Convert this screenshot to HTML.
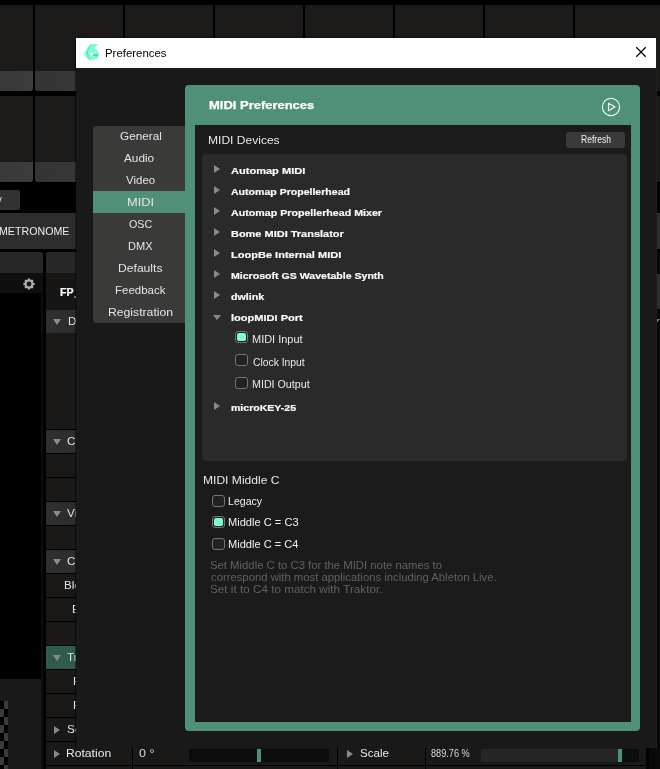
<!DOCTYPE html>
<html><head><meta charset="utf-8"><title>Preferences</title>
<style>
*{box-sizing:border-box;margin:0;padding:0}
html,body{width:660px;height:769px;overflow:hidden;background:#000}
body{position:relative;font-family:"Liberation Sans",sans-serif}
div,span,svg{position:absolute}
.t{white-space:pre;transform-origin:0 50%;display:block}
.cell{width:88px;background:#1b1a19;border-radius:0 0 3px 3px;overflow:hidden}
.cell i{position:absolute;left:0;right:0;bottom:0;height:19.6px;background:linear-gradient(90deg,#343434,#3c3c3c)}
.row{left:46px;width:600px;height:23px;background:#1a1918}
.hdr{background:linear-gradient(90deg,#2f2f2f 0,#2a2a2a 60px)}
.tri-r{width:0;height:0;border-left:6px solid #8a8a8a;border-top:4px solid transparent;border-bottom:4px solid transparent}
.tri-d{width:0;height:0;border-top:5px solid #8a8a8a;border-left:3.5px solid transparent;border-right:3.5px solid transparent}
.cb{width:12.5px;height:12px;border:1px solid #757575;border-radius:3px;background:#222}
.cb.on::after{content:"";position:absolute;left:.6px;top:.6px;right:.6px;bottom:.6px;border-radius:1.8px;background:#7dfcd3}
.gs{left:0;top:0;width:660px;height:769px;will-change:transform}
</style></head><body>
<!-- ===== background app ===== -->
<div id="bg" style="left:0;top:0;width:660px;height:769px">
<div class="cell" style="left:-55px;top:5px;height:85.5px"><i></i></div>
<div class="cell" style="left:-55px;top:95.8px;height:85.8px"><i></i></div>
<div class="cell" style="left:35px;top:5px;height:85.5px"><i></i></div>
<div class="cell" style="left:35px;top:95.8px;height:85.8px"><i></i></div>
<div class="cell" style="left:125px;top:5px;height:85.5px"><i></i></div>
<div class="cell" style="left:125px;top:95.8px;height:85.8px"><i></i></div>
<div class="cell" style="left:215px;top:5px;height:85.5px"><i></i></div>
<div class="cell" style="left:215px;top:95.8px;height:85.8px"><i></i></div>
<div class="cell" style="left:305px;top:5px;height:85.5px"><i></i></div>
<div class="cell" style="left:305px;top:95.8px;height:85.8px"><i></i></div>
<div class="cell" style="left:395px;top:5px;height:85.5px"><i></i></div>
<div class="cell" style="left:395px;top:95.8px;height:85.8px"><i></i></div>
<div class="cell" style="left:485px;top:5px;height:85.5px"><i></i></div>
<div class="cell" style="left:485px;top:95.8px;height:85.8px"><i></i></div>
<div class="cell" style="left:575px;top:5px;height:85.5px"><i></i></div>
<div class="cell" style="left:575px;top:95.8px;height:85.8px"><i></i></div>
<div class="cell" style="left:665px;top:5px;height:85.5px"><i></i></div>
<div class="cell" style="left:665px;top:95.8px;height:85.8px"><i></i></div>
<div style="left:656px;top:5px;width:4px;height:85.5px;background:#1b1a19"></div>
<div style="left:656px;top:95.8px;width:4px;height:85.8px;background:#1b1a19"></div>
<div style="left:0;top:190px;width:19.8px;height:19.7px;background:#323232;border-radius:0 2.5px 2.5px 0"></div>
<div style="left:-3px;top:196.5px;width:4px;height:5px;border-right:1.6px solid #ddd;transform:skewX(-18deg)"></div>
<div style="left:0;top:212.8px;width:660px;height:36px;background:#2d2d2d"></div>
<div style="left:-10px;top:252px;width:53px;height:22px;background:#272727;border-radius:3px 3px 0 0"></div>
<div style="left:46px;top:252px;width:600px;height:22px;background:#272727;border-radius:3px 3px 0 0"></div>
<div style="left:0;top:273px;width:43px;height:496px;background:#0e0e0e"></div>
<div style="left:0;top:293px;width:41px;height:386px;background:#000"></div>
<div style="left:0;top:679px;width:41px;height:90px;background:#191919"></div>
<div style="left:46px;top:273px;width:600px;height:37px;background:#171615"></div>
<div style="left:649px;top:252px;width:11px;height:517px;background:#090909"></div>
<div style="left:649px;top:274px;width:11px;height:35px;background:#2c2c2c"></div>
<div style="left:656px;top:319px;width:0;height:0;border-top:5px solid #777;border-right:4px solid transparent"></div>
<div style="left:0;top:701px;width:4px;height:68px;background:repeating-linear-gradient(180deg,#000 0 8px,#3a3a3a 8px 16px)"></div>
<div style="left:4px;top:701px;width:4px;height:68px;background:repeating-linear-gradient(180deg,#3a3a3a 0 8px,#000 8px 16px)"></div>
<div class="row hdr" style="top:310px;height:23px"></div>
<div class="row" style="top:333px;height:96px"></div>
<div class="row hdr" style="top:430px;"></div>
<div class="row" style="top:454px;"></div>
<div class="row" style="top:478px;"></div>
<div class="row hdr" style="top:502px;"></div>
<div class="row" style="top:526px;"></div>
<div class="row hdr" style="top:550px;"></div>
<div class="row" style="top:574px;"></div>
<div class="row" style="top:598px;"></div>
<div class="row" style="top:622px;"></div>
<div class="row" style="top:646px;background:#2f5b4b;"></div>
<div class="row" style="top:670px;"></div>
<div class="row" style="top:694px;"></div>
<div class="row" style="top:718px;"></div>
<div class="row" style="top:742px;"></div>
<div class="row" style="top:766px;"></div>
<div class="row" style="top:790px;"></div>
<div class="tri-d" style="left:52.7px;top:318.7px;border-top-width:6.4px;border-left-width:4.2px;border-right-width:4.2px"></div>
<div class="tri-d" style="left:52.7px;top:438.7px;border-top-width:6.4px;border-left-width:4.2px;border-right-width:4.2px"></div>
<div class="tri-d" style="left:52.7px;top:510.7px;border-top-width:6.4px;border-left-width:4.2px;border-right-width:4.2px"></div>
<div class="tri-d" style="left:52.7px;top:558.7px;border-top-width:6.4px;border-left-width:4.2px;border-right-width:4.2px"></div>
<div class="tri-d" style="left:52.7px;top:654.7px;border-top-width:6.4px;border-left-width:4.2px;border-right-width:4.2px"></div>
<div class="tri-r" style="left:54px;top:725.5px"></div>
<div class="tri-r" style="left:54px;top:749.5px"></div>
<div class="tri-r" style="left:347px;top:749.5px"></div>
<div style="left:132px;top:742px;width:1px;height:27px;background:#000"></div>
<div style="left:337px;top:742px;width:1px;height:27px;background:#000"></div>
<div style="left:425px;top:742px;width:1px;height:27px;background:#000"></div>
<div style="left:189px;top:749px;width:140px;height:13px;background:#0c0c0c"></div>
<div style="left:257px;top:749px;width:4px;height:13px;background:#4d9378"></div>
<div style="left:481px;top:749px;width:158px;height:13px;background:#0c0c0c"></div>
<div style="left:481px;top:749px;width:137px;height:13px;background:#262626"></div>
<div style="left:618px;top:749px;width:4px;height:13px;background:#4d9378"></div>
<svg style="left:23px;top:277.6px" width="12" height="12" viewBox="-6 -6 12 12"><g fill="#b2b2b2"><circle r="4.1"/><rect x="-1.25" y="-5.5" width="2.5" height="11" rx=".5"/><rect x="-5.5" y="-1.25" width="11" height="2.5" rx=".5"/><g transform="rotate(45)"><rect x="-1.25" y="-5.5" width="2.5" height="11" rx=".5"/><rect x="-5.5" y="-1.25" width="11" height="2.5" rx=".5"/></g></g><circle r="2.45" fill="#161616"/></svg>

<div class="gs"><span class="t" style="left:-0.52px;top:220.86px;font-size:10.5px;line-height:21px;color:#ececec;transform:scaleX(1.0141);">METRONOME</span>
<span class="t" style="left:66.38px;top:742.19px;font-size:11px;line-height:22px;color:#e8e8e8;transform:scaleX(1.1018);">Rotation</span>
<span class="t" style="left:59.70px;top:281.86px;font-size:10.5px;line-height:21px;color:#fff;font-weight:700;-webkit-text-stroke:0.20px;transform:scaleX(1.0149);">FP</span>
<span class="t" style="left:73.60px;top:283.86px;font-size:10.5px;line-height:21px;color:#ddd;font-weight:700;-webkit-text-stroke:0.20px;transform:scaleX(1.0600);">.</span>
<span class="t" style="left:67.90px;top:310.19px;font-size:11px;line-height:22px;color:#e4e4e4;transform:scaleX(1.0600);">Dashboard</span>
<span class="t" style="left:67.30px;top:430.19px;font-size:11px;line-height:22px;color:#e4e4e4;transform:scaleX(1.0600);">Cue Points</span>
<span class="t" style="left:67.30px;top:502.19px;font-size:11px;line-height:22px;color:#e4e4e4;transform:scaleX(1.0600);">Video</span>
<span class="t" style="left:67.30px;top:550.19px;font-size:11px;line-height:22px;color:#e4e4e4;transform:scaleX(1.0600);">Clip</span>
<span class="t" style="left:63.70px;top:574.19px;font-size:11px;line-height:22px;color:#e4e4e4;transform:scaleX(1.0600);">Blend Mode</span>
<span class="t" style="left:72.30px;top:598.19px;font-size:11px;line-height:22px;color:#e4e4e4;transform:scaleX(1.0600);">Enabled</span>
<span class="t" style="left:67.00px;top:646.19px;font-size:11px;line-height:22px;color:#e4e4e4;transform:scaleX(1.0600);">Transform</span>
<span class="t" style="left:73.30px;top:670.19px;font-size:11px;line-height:22px;color:#e4e4e4;transform:scaleX(1.0600);">Position X</span>
<span class="t" style="left:73.30px;top:694.19px;font-size:11px;line-height:22px;color:#e4e4e4;transform:scaleX(1.0600);">Position Y</span>
<span class="t" style="left:67.00px;top:718.19px;font-size:11px;line-height:22px;color:#e4e4e4;transform:scaleX(1.0600);">Scale</span>
<span class="t" style="left:138.95px;top:742.19px;font-size:11px;line-height:22px;color:#d8d8d8;transform:scaleX(1.1348);">0 °</span>
<span class="t" style="left:359.69px;top:742.19px;font-size:11px;line-height:22px;color:#e8e8e8;transform:scaleX(1.0529);">Scale</span>
<span class="t" style="left:430.96px;top:743.53px;font-size:10px;line-height:20px;color:#d8d8d8;transform:scaleX(0.9148);">889.76 %</span></div>
</div>
<!-- ===== dialog ===== -->
<div id="dlg" style="left:76px;top:37.6px;width:581px;height:710.8px;background:#191919;border-right:1px solid #1f1f1f;box-shadow:-1px 0 0 rgba(0,0,0,.45),0 -1px 0 rgba(0,0,0,.3)">
  <div style="left:0;top:0;width:580.2px;height:30.2px;background:#fff"></div>
</div>
<div style="left:185px;top:85px;width:455px;height:646px;background:#4f9077;border-radius:4px"></div>
<div style="left:195px;top:125px;width:436px;height:597px;background:#1b1b1b"></div>
<div style="left:93px;top:125.7px;width:92px;height:197.1px;background:#3a3a39;border-radius:4px 0 0 4px"></div>
<div style="left:93px;top:191px;width:92px;height:22px;background:#4f9077"></div>
<div style="left:566px;top:132px;width:59px;height:16px;background:#3a3a3a;border-radius:3px"></div>
<div style="left:202px;top:154px;width:425px;height:307px;background:#2a2a2a;border-radius:4px"></div>
<div class="tri-r" style="left:214px;top:165.2px"></div>
<div class="tri-r" style="left:214px;top:186.2px"></div>
<div class="tri-r" style="left:214px;top:207.2px"></div>
<div class="tri-r" style="left:214px;top:228.2px"></div>
<div class="tri-r" style="left:214px;top:249.2px"></div>
<div class="tri-r" style="left:214px;top:270.2px"></div>
<div class="tri-r" style="left:214px;top:291.2px"></div>
<div class="tri-r" style="left:214px;top:402.2px"></div>
<div class="tri-d" style="left:213.3px;top:315px;border-top-width:5.5px;border-left-width:4px;border-right-width:4px"></div>
<div class="cb on" style="left:235.3px;top:331px"></div>
<div class="cb" style="left:235.3px;top:354px"></div>
<div class="cb" style="left:235.3px;top:377px"></div>
<div class="cb" style="left:212px;top:495px"></div>
<div class="cb on" style="left:212px;top:516px"></div>
<div class="cb" style="left:212px;top:538px"></div>
<svg style="left:80px;top:40px" width="24" height="24" viewBox="0 0 24 24">
<path d="M10.9 4 L18.1 4 L13.8 8.7 C16.8 8.7 19 11 19 14 C19 17.5 16 20 12 20 C8 20 4.9 17.4 4.9 13.8 C4.9 12 5.5 10.6 6.5 9.3 L10.9 4 Z" fill="#7dffd6"/>
<path d="M10.6 5.2 C8.5 8 7.2 10.5 7.3 13.5 C7.4 16.2 8.6 18.3 10.5 19.6" fill="none" stroke="#62d9b2" stroke-width="1.3" opacity=".8"/>
<path d="M13.3 13.9 L18.2 14.6 L17.8 16.4 L13 16 Z" fill="#5fd0aa"/>
<circle cx="11.6" cy="14" r="1.5" fill="#fff"/>
</svg>
<svg style="left:631px;top:42px" width="20" height="20" viewBox="0 0 20 20"><path d="M5.3 5.3 L14.7 14.7 M14.7 5.3 L5.3 14.7" stroke="#000" stroke-width="1.25" fill="none"/></svg>
<svg style="left:599px;top:95px" width="24" height="24" viewBox="0 0 24 24"><circle cx="12" cy="12" r="8.6" fill="none" stroke="#eefff8" stroke-width="1.1"/><path d="M9.5 8.3 L9.5 15.7 L16 12 Z" fill="none" stroke="#eefff8" stroke-width="1.1" stroke-linejoin="round"/></svg>

<div class="gs"><span class="t" style="left:104.86px;top:41.28px;font-size:11.6px;line-height:23px;color:#000;transform:scaleX(0.9851);">Preferences</span>
<span class="t" style="left:120.00px;top:125.19px;font-size:11px;line-height:22px;color:#e4e4e4;transform:scaleX(1.0691);">General</span>
<span class="t" style="left:124.20px;top:147.19px;font-size:11px;line-height:22px;color:#e4e4e4;transform:scaleX(1.0694);">Audio</span>
<span class="t" style="left:126.05px;top:169.19px;font-size:11px;line-height:22px;color:#e4e4e4;transform:scaleX(1.0450);">Video</span>
<span class="t" style="left:126.98px;top:191.19px;font-size:11px;line-height:22px;color:#e4e4e4;transform:scaleX(1.1700);">MIDI</span>
<span class="t" style="left:129.22px;top:213.19px;font-size:11px;line-height:22px;color:#e4e4e4;transform:scaleX(0.9736);">OSC</span>
<span class="t" style="left:127.52px;top:235.19px;font-size:11px;line-height:22px;color:#e4e4e4;transform:scaleX(1.0015);">DMX</span>
<span class="t" style="left:117.83px;top:257.19px;font-size:11px;line-height:22px;color:#e4e4e4;transform:scaleX(1.1028);">Defaults</span>
<span class="t" style="left:114.90px;top:279.19px;font-size:11px;line-height:22px;color:#e4e4e4;transform:scaleX(1.0426);">Feedback</span>
<span class="t" style="left:108.01px;top:301.19px;font-size:11px;line-height:22px;color:#e4e4e4;transform:scaleX(1.1082);">Registration</span>
<span class="t" style="left:208.50px;top:94.19px;font-size:11px;line-height:22px;color:#fff;font-weight:700;-webkit-text-stroke:0.25px;transform:scaleX(1.1793);">MIDI Preferences</span>
<span class="t" style="left:207.51px;top:129.19px;font-size:11px;line-height:22px;color:#e8e8e8;transform:scaleX(1.0956);">MIDI Devices</span>
<span class="t" style="left:580.95px;top:129.53px;font-size:10px;line-height:20px;color:#f0f0f0;transform:scaleX(0.8555);">Refresh</span>
<span class="t" style="left:231.25px;top:161.21px;font-size:9.5px;line-height:19px;color:#fafafa;font-weight:700;-webkit-text-stroke:0.20px;transform:scaleX(1.1629);">Automap MIDI</span>
<span class="t" style="left:231.25px;top:182.21px;font-size:9.5px;line-height:19px;color:#fafafa;font-weight:700;-webkit-text-stroke:0.20px;transform:scaleX(1.1101);">Automap Propellerhead</span>
<span class="t" style="left:231.25px;top:203.21px;font-size:9.5px;line-height:19px;color:#fafafa;font-weight:700;-webkit-text-stroke:0.20px;transform:scaleX(1.1215);">Automap Propellerhead Mixer</span>
<span class="t" style="left:231.25px;top:224.21px;font-size:9.5px;line-height:19px;color:#fafafa;font-weight:700;-webkit-text-stroke:0.20px;transform:scaleX(1.1546);">Bome MIDI Translator</span>
<span class="t" style="left:231.25px;top:245.21px;font-size:9.5px;line-height:19px;color:#fafafa;font-weight:700;-webkit-text-stroke:0.20px;transform:scaleX(1.1605);">LoopBe Internal MIDI</span>
<span class="t" style="left:231.10px;top:266.21px;font-size:9.5px;line-height:19px;color:#fafafa;font-weight:700;-webkit-text-stroke:0.20px;transform:scaleX(1.1121);">Microsoft GS Wavetable Synth</span>
<span class="t" style="left:231.25px;top:287.21px;font-size:9.5px;line-height:19px;color:#fafafa;font-weight:700;-webkit-text-stroke:0.20px;transform:scaleX(1.1252);">dwlink</span>
<span class="t" style="left:231.25px;top:308.21px;font-size:9.5px;line-height:19px;color:#fafafa;font-weight:700;-webkit-text-stroke:0.20px;transform:scaleX(1.1619);">loopMIDI Port</span>
<span class="t" style="left:231.25px;top:397.71px;font-size:9.5px;line-height:19px;color:#fafafa;font-weight:700;-webkit-text-stroke:0.20px;transform:scaleX(1.1092);">microKEY-25</span>
<span class="t" style="left:252.37px;top:329.54px;font-size:10px;line-height:20px;color:#e8e8e8;transform:scaleX(1.0966);">MIDI Input</span>
<span class="t" style="left:253.20px;top:352.54px;font-size:10px;line-height:20px;color:#e8e8e8;transform:scaleX(1.0333);">Clock Input</span>
<span class="t" style="left:252.33px;top:375.29px;font-size:10px;line-height:20px;color:#e8e8e8;transform:scaleX(1.0696);">MIDI Output</span>
<span class="t" style="left:202.93px;top:469.19px;font-size:11px;line-height:22px;color:#e8e8e8;transform:scaleX(1.0970);">MIDI Middle C</span>
<span class="t" style="left:227.64px;top:490.19px;font-size:11px;line-height:22px;color:#f0f0f0;transform:scaleX(0.9617);">Legacy</span>
<span class="t" style="left:228.10px;top:511.19px;font-size:11px;line-height:22px;color:#f0f0f0;transform:scaleX(1.0081);">Middle C = C3</span>
<span class="t" style="left:228.10px;top:532.69px;font-size:11px;line-height:22px;color:#f0f0f0;transform:scaleX(1.0055);">Middle C = C4</span>
<span class="t" style="left:210.23px;top:554.28px;font-size:10.75px;line-height:22px;color:#606060;transform:scaleX(1.0524);">Set Middle C to C3 for the MIDI note names to</span>
<span class="t" style="left:211.05px;top:566.28px;font-size:10.75px;line-height:22px;color:#606060;transform:scaleX(1.0504);">correspond with most applications including Ableton Live.</span>
<span class="t" style="left:210.17px;top:578.28px;font-size:10.75px;line-height:22px;color:#606060;transform:scaleX(1.0890);">Set it to C4 to match with Traktor.</span></div>
</body></html>
